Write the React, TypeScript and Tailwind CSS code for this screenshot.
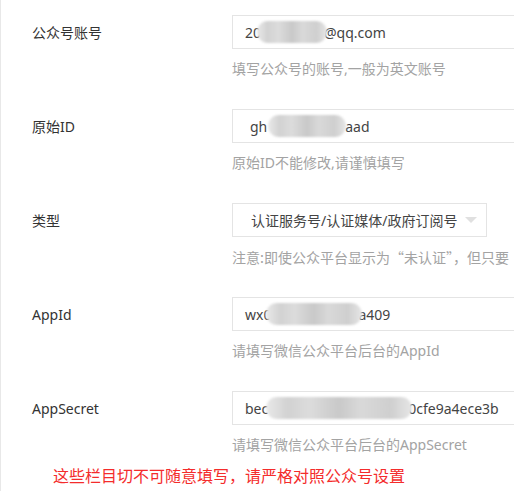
import React from 'react';

const font = 'font-["Noto_Sans","Noto_Sans_CJK_SC",sans-serif]';

function Mosaic({ className }: { className: string }) {
  return (
    <span
      className={`inline-block h-[22px] rounded-[11px] blur-[1px] bg-[linear-gradient(90deg,#e9e9e9,#d2d2d2_15%,#dcdcdc_30%,#c9c9c9_50%,#d9d9d9_65%,#cfcfcf_85%,#e6e6e6)] ${className}`} />
  );
}

function Row({ label, help, helpClass = '', children }: { label: string; help: string; helpClass?: string; children: React.ReactNode }) {
  return (
    <div className="flex mb-[30px]">
      <div className="w-[231px] shrink-0 pl-[31px] h-[34px] flex items-center text-[14px] text-[#333]">
        {label}
      </div>
      <div className="flex flex-col">
        {children}
        <div className={`mt-[10px] leading-[20px] text-[14px] text-[#a3a3a3] whitespace-nowrap ${helpClass}`}>{help}</div>
      </div>
    </div>
  );
}

function Field({ children }: { children: React.ReactNode }) {
  return (
    <div className="w-[320px] h-[34px] border border-[#e4e4e4] pl-3 flex items-center text-[14px] text-[#444] whitespace-nowrap">
      {children}
    </div>
  );
}

export default function App() {
  return (
    <div className={`w-[514px] h-[491px] overflow-hidden bg-white border-l border-[#e8e8e8] pt-[15px] ${font}`}>
      <Row label="公众号账号" help="填写公众号的账号,一般为英文账号">
        <Field>
          <span>20</span>
          <Mosaic className="w-[70px] -ml-[4px]" />
          <span className="-ml-[3px]">@qq.com</span>
        </Field>
      </Row>

      <Row label="原始ID" help="原始ID不能修改,请谨慎填写">
        <Field>
          <span className="ml-[5px]">gh</span>
          <Mosaic className="w-[78px] ml-[1px]" />
          <span className="-ml-[1px]">aad</span>
        </Field>
      </Row>

      <Row
        label="类型"
        help="注意:即使公众平台显示为“未认证”，但只要"
        helpClass='font-["Noto_Sans_CJK_SC",sans-serif]'>
        <div className="w-[255px] h-[34px] border border-[#e4e4e4] pl-[18px] pr-[9px] flex items-center justify-between text-[14px] text-[#444] whitespace-nowrap">
          <span>认证服务号/认证媒体/政府订阅号</span>
          <svg width="12" height="7" viewBox="0 0 12 7">
            <path d="M0 0 L12 0 L6 6 Z" fill="#e0e0e0" />
          </svg>
        </div>
      </Row>

      <Row label="AppId" help="请填写微信公众平台后台的AppId">
        <Field>
          <span>wx0</span>
          <Mosaic className="w-[96px] -ml-[5px]" />
          <span className="-ml-[4px]">a409</span>
        </Field>
      </Row>

      <div className="flex">
        <div className="w-[231px] shrink-0 pl-[31px] h-[34px] flex items-center text-[14px] text-[#333]">
          AppSecret
        </div>
        <div className="flex flex-col">
          <Field>
            <span>bec</span>
            <Mosaic className="w-[146px] -ml-[2px]" />
            <span className="-ml-[4px]">0cfe9a4ece3b</span>
          </Field>
          <div className="mt-[10px] leading-[20px] text-[14px] text-[#a3a3a3] whitespace-nowrap">
            请填写微信公众平台后台的AppSecret
          </div>
        </div>
      </div>

      <p className="mt-[9px] pl-[52px] text-[16px] leading-[24px] text-[#f42c2c] whitespace-nowrap">
        这些栏目切不可随意填写，请严格对照公众号设置
      </p>
    </div>
  );
}
